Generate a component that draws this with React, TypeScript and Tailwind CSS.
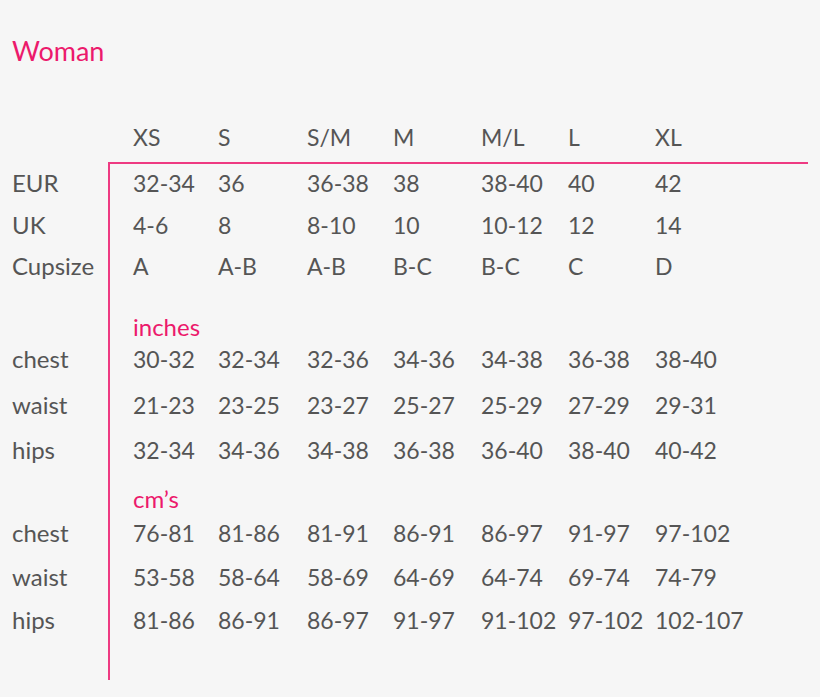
import React from "react";

const cols = ["XS", "S", "S/M", "M", "M/L", "L", "XL"];

type Row = { label?: string; unit?: string; values?: string[]; h: string };

const rows: Row[] = [
  { label: "EUR", values: ["32-34", "36", "36-38", "38", "38-40", "40", "42"], h: "h-[42px]" },
  { label: "UK", values: ["4-6", "8", "8-10", "10", "10-12", "12", "14"], h: "h-[41px]" },
  { label: "Cupsize", values: ["A", "A-B", "A-B", "B-C", "B-C", "C", "D"], h: "h-[61px]" },
  { unit: "inches", h: "h-[32px]" },
  { label: "chest", values: ["30-32", "32-34", "32-36", "34-36", "34-38", "36-38", "38-40"], h: "h-[46px]" },
  { label: "waist", values: ["21-23", "23-25", "23-27", "25-27", "25-29", "27-29", "29-31"], h: "h-[45px]" },
  { label: "hips", values: ["32-34", "34-36", "34-38", "36-38", "36-40", "38-40", "40-42"], h: "h-[49px]" },
  { unit: "cm\u2019s", h: "h-[34px]" },
  { label: "chest", values: ["76-81", "81-86", "81-91", "86-91", "86-97", "91-97", "97-102"], h: "h-[44px]" },
  { label: "waist", values: ["53-58", "58-64", "58-69", "64-69", "64-74", "69-74", "74-79"], h: "h-[43px]" },
  { label: "hips", values: ["81-86", "86-91", "86-97", "91-97", "91-102", "97-102", "102-107"], h: "h-[75px]" },
];

const grid = "grid grid-cols-[85px_89px_86px_88px_87px_87px_1fr]";

export default function App() {
  return (
    <div
      className="w-[820px] h-[697px] bg-[#f6f6f6] text-[#555555] overflow-hidden"
      style={{ fontFamily: "Lato, 'Noto Sans', sans-serif" }}
    >
      <div className="pt-[36px] pl-3 h-[122px]">
        <h1 className="text-[27px] leading-[30px] text-[#ec1a6c] font-normal">Woman</h1>
      </div>
      <div className={`${grid} pl-[133px] h-[40px] text-[23px] leading-[30px]`}>
        {cols.map((c) => (
          <div key={c}>{c}</div>
        ))}
      </div>
      <div className="flex w-[808px] text-[23px] leading-[30px]">
        <div className="w-[108px] pt-[6px] pl-3 text-[24px]">
          {rows.map((r, i) => (
            <div key={i} className={r.h}>
              {r.label ?? ""}
            </div>
          ))}
        </div>
        <div className="flex-1 h-[518px] border-l-2 border-t-2 border-[#ee3a82] pl-[23px] pt-[4px]">
          {rows.map((r, i) =>
            r.unit ? (
              <div key={i} className={`${r.h} text-[#ec1a6c] text-[24px]`}>
                {r.unit}
              </div>
            ) : (
              <div key={i} className={`${grid} ${r.h}`}>
                {r.values!.map((v, j) => (
                  <div key={j}>{v}</div>
                ))}
              </div>
            )
          )}
        </div>
      </div>
    </div>
  );
}
